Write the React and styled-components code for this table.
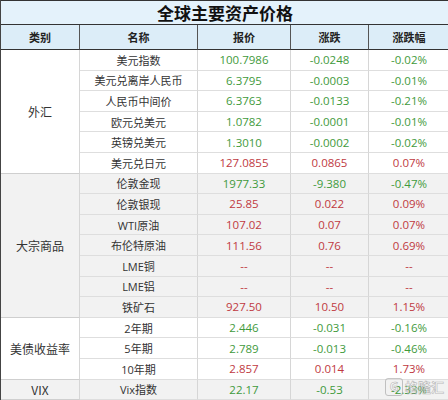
import React from "react";
import styled, { createGlobalStyle } from "styled-components";

const GlobalStyle = createGlobalStyle`
  body {
    margin: 0;
    background: #fff;
    font-family: "Open Sans", "Noto Sans CJK SC", sans-serif;
  }
`;

const groups = [
  {
    name: "外汇",
    shade: false,
    rows: [
      ["美元指数", "100.7986", "-0.0248", "-0.02%"],
      ["美元兑离岸人民币", "6.3795", "-0.0003", "-0.01%"],
      ["人民币中间价", "6.3763", "-0.0133", "-0.21%"],
      ["欧元兑美元", "1.0782", "-0.0001", "-0.01%"],
      ["英镑兑美元", "1.3010", "-0.0002", "-0.02%"],
      ["美元兑日元", "127.0855", "0.0865", "0.07%"],
    ],
  },
  {
    name: "大宗商品",
    shade: true,
    rows: [
      ["伦敦金现", "1977.33", "-9.380", "-0.47%"],
      ["伦敦银现", "25.85", "0.022", "0.09%"],
      ["WTI原油", "107.02", "0.07", "0.07%"],
      ["布伦特原油", "111.56", "0.76", "0.69%"],
      ["LME铜", "--", "--", "--"],
      ["LME铝", "--", "--", "--"],
      ["铁矿石", "927.50", "10.50", "1.15%"],
    ],
  },
  {
    name: "美债收益率",
    shade: false,
    rows: [
      ["2年期", "2.446", "-0.031", "-0.16%"],
      ["5年期", "2.789", "-0.013", "-0.46%"],
      ["10年期", "2.857", "0.014", "1.73%"],
    ],
  },
  {
    name: "VIX",
    shade: true,
    rows: [["Vix指数", "22.17", "-0.53", "-2.33%"]],
  },
];

const toneOf = (change) => {
  if (change === "--") return "flat";
  return change.startsWith("-") ? "down" : "up";
};

export default function App() {
  let line = 3;
  return (
    <>
      <GlobalStyle />
      <Sheet>
        <Title>全球主要资产价格</Title>
        <Head>类别</Head>
        <Head>名称</Head>
        <Head>报价</Head>
        <Head>涨跌</Head>
        <Head $last>涨跌幅</Head>
        {groups.map((g) => {
          const start = line;
          line += g.rows.length;
          return (
            <React.Fragment key={g.name}>
              <Category
                $shade={g.shade}
                style={{ gridRow: `${start} / span ${g.rows.length}` }}
              >
                {g.name}
              </Category>
              {g.rows.map((r) => {
                const tone = toneOf(r[2]);
                return (
                  <React.Fragment key={r[0]}>
                    <Name $shade={g.shade}>{r[0]}</Name>
                    <Value $shade={g.shade} $tone={tone}>{r[1]}</Value>
                    <Value $shade={g.shade} $tone={tone}>{r[2]}</Value>
                    <Value $shade={g.shade} $tone={tone} $last>{r[3]}</Value>
                  </React.Fragment>
                );
              })}
            </React.Fragment>
          );
        })}
        <Watermark>
          <Mark>G</Mark>
          <span>格隆汇</span>
        </Watermark>
      </Sheet>
    </>
  );
}

const Sheet = styled.div`
  position: relative;
  width: 448px;
  height: 400px;
  overflow: hidden;
  display: grid;
  grid-template-columns: 79px 118px 93px 78px 80px;
  grid-template-rows: 25px 25px;
  grid-auto-rows: 20.6px;
  box-sizing: border-box;
  border-left: 1px solid #444;
`;

const Title = styled.div`
  grid-column: 1 / -1;
  display: flex;
  align-items: center;
  justify-content: center;
  background: #e4f2fb;
  border-top: 1px solid #333;
  border-bottom: 1px solid #333;
  font-family: "Noto Sans CJK SC", sans-serif;
  font-size: 17px;
  font-weight: 700;
  color: #111;
  box-sizing: border-box;
`;

const Head = styled.div`
  display: flex;
  align-items: center;
  justify-content: center;
  background: #dcedf8;
  border-bottom: 1px solid #333;
  border-right: ${(p) => (p.$last ? "none" : "1px solid #555")};
  font-family: "Noto Sans CJK SC", sans-serif;
  font-size: 11px;
  font-weight: 700;
  color: #222;
  box-sizing: border-box;
`;

const Cell = styled.div`
  display: flex;
  align-items: center;
  justify-content: center;
  box-sizing: border-box;
  background: ${(p) => (p.$shade ? "#f2f2f2" : "#ffffff")};
  border-bottom: 1px solid #dedede;
  border-right: ${(p) => (p.$last ? "none" : "1px solid #d6d6d6")};
  white-space: nowrap;
`;

const Category = styled(Cell)`
  grid-column: 1;
  font-family: "Noto Sans CJK SC", sans-serif;
  font-size: 12px;
  color: #333;
  border-bottom-color: #cfcfcf;
`;

const Name = styled(Cell)`
  font-family: "Open Sans", "Noto Sans CJK SC", sans-serif;
  font-size: 11px;
  color: #333;
`;

const tones = { up: "#c0393f", down: "#3f9a3c", flat: "#c0393f" };

const Value = styled(Cell)`
  font-family: "Open Sans", sans-serif;
  font-size: 11.5px;
  color: ${(p) => tones[p.$tone]};
`;

const Watermark = styled.div`
  position: absolute;
  right: 4px;
  bottom: 4px;
  display: flex;
  align-items: center;
  gap: 2px;
  opacity: 0.55;
  font-family: "Noto Sans CJK SC", sans-serif;
  font-size: 13px;
  font-weight: 700;
  color: #fff;
  -webkit-text-stroke: 0.6px #888;
`;

const Mark = styled.span`
  display: inline-flex;
  align-items: center;
  justify-content: center;
  width: 16px;
  height: 16px;
  border: 1.5px solid #999;
  border-radius: 3px;
  font-family: "Open Sans", sans-serif;
  font-size: 12px;
  color: #fff;
`;
